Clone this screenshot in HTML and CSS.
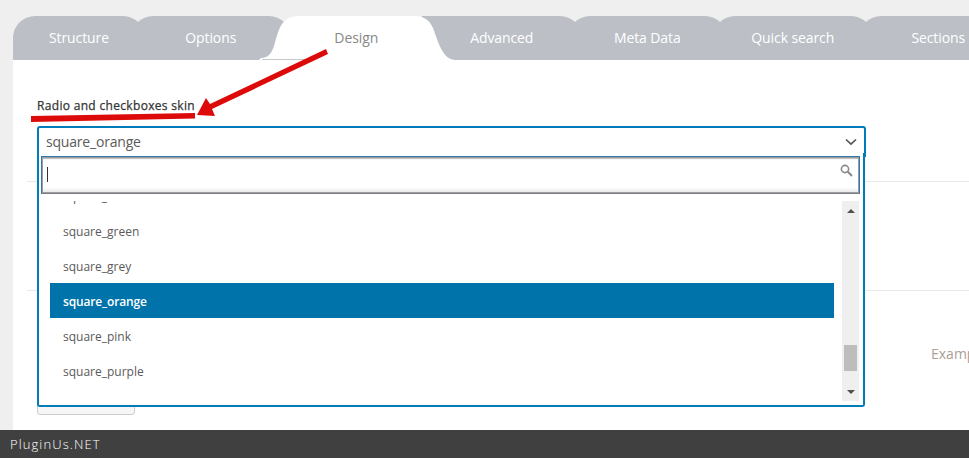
FILE: index.html
```html
<!DOCTYPE html>
<html lang="en">
<head>
  <meta charset="UTF-8" />
  <meta name="viewport" content="width=device-width, initial-scale=1" />
  <title>Design - PluginUs.NET</title>
  <link rel="stylesheet" href="styles.css">
</head>
<body>

  <div class="page">
    <nav class="tabs">
      <a class="tab tab-first">Structure</a>
      <a class="tab">Options</a>
      <a class="tab tab-active">
        <svg class="tab-shape" width="197" height="44" viewBox="0 0 197 44">
          <path d="M0 44 L2 42 C10 42 13 36 15 30 C18 20 20 8 28 3 C31 1 35 0 40 0 L155 0 C164 0 170 3 174 12 C177 20 180 30 184 36 C188 42 192 44 197 44 Z" fill="#fff"/>
          <path d="M3 43.5 L48 43.5" stroke="#c4c7cb" stroke-width="1"/>
        </svg>
        <span class="tab-label">Design</span>
      </a>
      <a class="tab tab-after">Advanced</a>
      <a class="tab">Meta Data</a>
      <a class="tab">Quick search</a>
      <a class="tab">Sections</a>
    </nav>

    <main class="panel">
      <section class="row row-skin">
        <label class="field-label">Radio and checkboxes skin</label>
        <div class="field">
          <div class="select-box">
            <span>square_orange</span>
            <svg class="chevron" width="12" height="8" viewBox="0 0 12 8">
              <path d="M1 1.5 L6 6.2 L11 1.5" fill="none" stroke="#555" stroke-width="1.7"/>
            </svg>
          </div>
          <div class="dropdown">
            <div class="search">
              <span class="caret"></span>
              <svg class="search-icon" width="13" height="13" viewBox="0 0 13 13">
                <circle cx="5" cy="5" r="3.6" fill="none" stroke="#8a8a8a" stroke-width="1.6"/>
                <path d="M7.8 7.8 L12 12" stroke="#8a8a8a" stroke-width="2"/>
              </svg>
            </div>
            <div class="results">
              <ul class="options">
                <li>square_blue</li>
                <li>square_green</li>
                <li>square_grey</li>
                <li class="selected">square_orange</li>
                <li>square_pink</li>
                <li>square_purple</li>
              </ul>
              <div class="scrollbar">
                <span class="arrow-up"></span>
                <span class="thumb"></span>
                <span class="arrow-down"></span>
              </div>
            </div>
          </div>
        </div>
      </section>

      <section class="row row-empty"></section>

      <section class="row row-last">
        <div class="row-control">
          <button class="btn" type="button"></button>
        </div>
        <p class="example">Example</p>
      </section>
    </main>

    <svg class="callout" width="340" height="125" viewBox="0 0 340 125">
      <path d="M326 49 L328 54 L212 109 L215 116 L197 115 L206 98 L210 104 Z" fill="#dd0a0a"/>
      <path d="M31 116 L195 113 L195 118.5 L31 122 Z" fill="#dd0a0a"/>
    </svg>
  </div>

  <footer class="footer">PluginUs.NET</footer>

</body>
</html>
```

FILE: styles.css
```css
* {
  box-sizing: border-box;
}

html, body {
  height: 100%;
}

body {
  margin: 0;
  font-family: 'Open Sans', sans-serif;
  background-color: #efefef;
  color: #5a5a5a;
  display: flex;
  flex-direction: column;
  overflow: hidden;
}

.page {
  position: relative;
  flex: 1;
  min-height: 0;
  padding: 16px 0 0 13px;
  display: flex;
  flex-direction: column;
  overflow: hidden;
}

.tabs {
  display: flex;
  flex: none;
  height: 44px;
}

.tab {
  position: relative;
  flex: none;
  width: 159.5px;
  margin-left: -14px;
  background-color: #bcc0c6;
  border-radius: 22px 22px 0 0;
  color: #fff;
  font-size: 14px;
  letter-spacing: -0.1px;
  line-height: 44px;
  text-align: center;
}

.tab-first {
  width: 132px;
  margin-left: 0;
}

.tab-active {
  background: none;
  color: #888;
  z-index: 2;
}

.tab-after {
  border-top-left-radius: 0;
}

.tab-shape {
  position: absolute;
  left: -18px;
  top: 0;
}

.tab-label {
  position: relative;
}

.panel {
  flex: 1;
  min-height: 0;
  background-color: #fff;
  padding-left: 14px;
}

.row {
  border-bottom: 1px solid #e6eaec;
}

.row-skin {
  height: 122px;
  padding: 38px 0 0 10px;
}

.row-empty {
  height: 109px;
}

.row-last {
  border-bottom: none;
  display: flex;
  padding-left: 10px;
}

.field-label {
  display: block;
  font-size: 12px;
  letter-spacing: 0.32px;
  -webkit-text-stroke: 0.25px #333;
  line-height: 16px;
  color: #333;
  margin-bottom: 12px;
}

.field {
  position: relative;
  width: 829px;
}

.select-box {
  height: 31px;
  border: 2px solid #007cba;
  border-radius: 3px 3px 0 0;
  padding-left: 7px;
  display: flex;
  align-items: center;
  justify-content: space-between;
  font-size: 14px;
  letter-spacing: -0.2px;
  background-color: #fff;
}

.chevron {
  margin-right: 7px;
}

.dropdown {
  position: absolute;
  z-index: 3;
  left: 0;
  top: 27px;
  width: 828px;
  height: 254px;
  padding: 3px 3px 0 2px;
  background-color: #fff;
  border: 2px solid #007cba;
  border-top: none;
  border-radius: 0 0 3px 3px;
}

.search {
  position: relative;
  height: 38px;
  border: 1px solid #2f78ae;
  border-bottom-color: #7a7f85;
  background: linear-gradient(#fff 84%, #e6e6e6);
  box-shadow: inset 0 0 0 1px #9c9c9c, inset 0 2px 1px #bbb;
}

.caret {
  position: absolute;
  left: 5px;
  top: 10px;
  width: 1px;
  height: 15px;
  background-color: #333;
}

.search-icon {
  position: absolute;
  right: 6px;
  top: 7px;
}

.results {
  display: flex;
  justify-content: space-between;
  height: 200px;
  margin-top: 7px;
  padding: 0 1px 0 9px;
  overflow: hidden;
}

.options {
  list-style: none;
  margin: -23px 0 0;
  padding: 0;
  width: 784px;
}

.options li {
  height: 35px;
  padding-left: 13px;
  font-size: 12px;
  line-height: 37px;
}

.options .selected {
  background-color: #0073aa;
  color: #fff;
  font-weight: 600;
  letter-spacing: -0.15px;
}

.scrollbar {
  width: 17px;
  height: 200px;
  background-color: #efefef;
  display: flex;
  flex-direction: column;
  align-items: center;
  padding-top: 8px;
}

.arrow-up,
.arrow-down {
  flex: none;
  width: 0;
  height: 0;
  border-left: 4px solid transparent;
  border-right: 4px solid transparent;
}

.arrow-up {
  border-bottom: 4px solid #505050;
}

.arrow-down {
  border-top: 4px solid #505050;
  margin-top: 19px;
}

.thumb {
  flex: none;
  width: 13px;
  height: 26px;
  margin-top: 132px;
  background-color: #bdbdbd;
}

.row-control {
  flex: none;
  width: 894px;
}

.btn {
  display: block;
  width: 98px;
  height: 34px;
  margin-top: 90px;
  background-color: #f6f6f6;
  border: 1px solid #ccc;
  border-radius: 3px;
}

.example {
  margin: 53px 0 0;
  font-size: 14px;
  line-height: 19px;
  color: #aaa096;
  white-space: nowrap;
}

.callout {
  position: absolute;
  left: 0;
  top: 0;
  z-index: 5;
}

.footer {
  flex: none;
  height: 28px;
  background-color: #404040;
  color: #fff;
  font-size: 13px;
  font-weight: 300;
  line-height: 28px;
  letter-spacing: 1.1px;
  padding-left: 10px;
}
```
